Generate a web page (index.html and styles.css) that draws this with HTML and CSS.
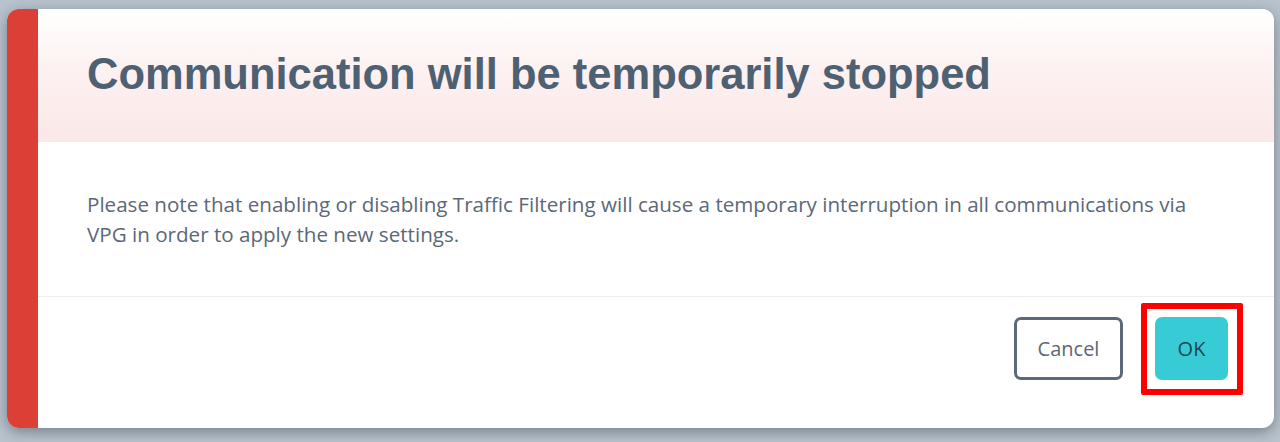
FILE: index.html
```html
<!DOCTYPE html>
<html lang="en">
<head>
<meta charset="utf-8">
<title>Communication will be temporarily stopped</title>
<link rel="stylesheet" href="styles.css">
</head>
<body>
<div class="backdrop">
  <div class="modal" role="dialog" aria-labelledby="dlg-title">
    <div class="stripe"></div>
    <div class="panel">
      <header class="modal-header">
        <h1 id="dlg-title" class="title">Communication will be temporarily stopped</h1>
      </header>
      <section class="modal-body">
        <p class="message">Please note that enabling or disabling Traffic Filtering will cause a temporary interruption in all communications via VPG in order to apply the new settings.</p>
      </section>
      <footer class="modal-footer">
        <button class="btn btn-cancel" type="button">Cancel</button>
        <button class="btn btn-ok highlight" type="button">OK</button>
      </footer>
    </div>
  </div>
</div>
</body>
</html>
```
FILE: styles.css
```css
* { box-sizing: border-box; }
html, body { margin: 0; padding: 0; }
body {
  width: 1280px;
  height: 442px;
  overflow: hidden;
  background: #b8c3cd;
  font-family: "Open Sans", "Liberation Sans", sans-serif;
}
.backdrop {
  padding: 9px 6px 0 7px;
}
.modal {
  display: flex;
  width: 1267px;
  height: 419px;
  border-radius: 12px;
  overflow: hidden;
  background: #ffffff;
  box-shadow: 0 4px 14px rgba(40, 50, 60, 0.45);
}
.stripe {
  width: 31px;
  flex: none;
  background: #dc3f36;
}
.panel {
  flex: 1;
  display: flex;
  flex-direction: column;
}
.modal-header {
  height: 133px;
  display: flex;
  align-items: center;
  padding: 0 49px;
  background: linear-gradient(to bottom, #ffffff 0%, #fdf1f1 45%, #fbe8e8 100%);
}
.title {
  margin: 0;
  font-family: "Liberation Sans", Arial, sans-serif;
  font-weight: 700;
  font-size: 43.5px;
  color: #4e6173;
  padding-bottom: 2px;
}
.modal-body {
  height: 155px;
  display: flex;
  align-items: center;
  padding: 0 46px 0 49px;
  border-bottom: 1px solid #eceef0;
}
.message {
  margin: 0;
  font-size: 20.6px;
  line-height: 30px;
  color: #5b6877;
  max-width: 1140px;
}
.modal-footer {
  flex: 1;
  display: flex;
  justify-content: flex-end;
  align-items: flex-start;
  gap: 32px;
  padding: 20px 46px 0 0;
}
.btn {
  height: 63px;
  border-radius: 7px;
  font-family: "Open Sans", "Liberation Sans", sans-serif;
  font-size: 20px;
  cursor: pointer;
}
.btn-cancel {
  width: 109px;
  background: #ffffff;
  border: 3px solid #5b6978;
  color: #5b6877;
}
.btn-ok {
  width: 73px;
  background: #37ccd5;
  border: none;
  color: #1e4450;
}
.highlight {
  position: relative;
}
.highlight::after {
  content: "";
  position: absolute;
  top: -14px;
  left: -14px;
  right: -15px;
  bottom: -15px;
  border: 6px solid #ff0000;
  border-radius: 2px;
  pointer-events: none;
}
```
